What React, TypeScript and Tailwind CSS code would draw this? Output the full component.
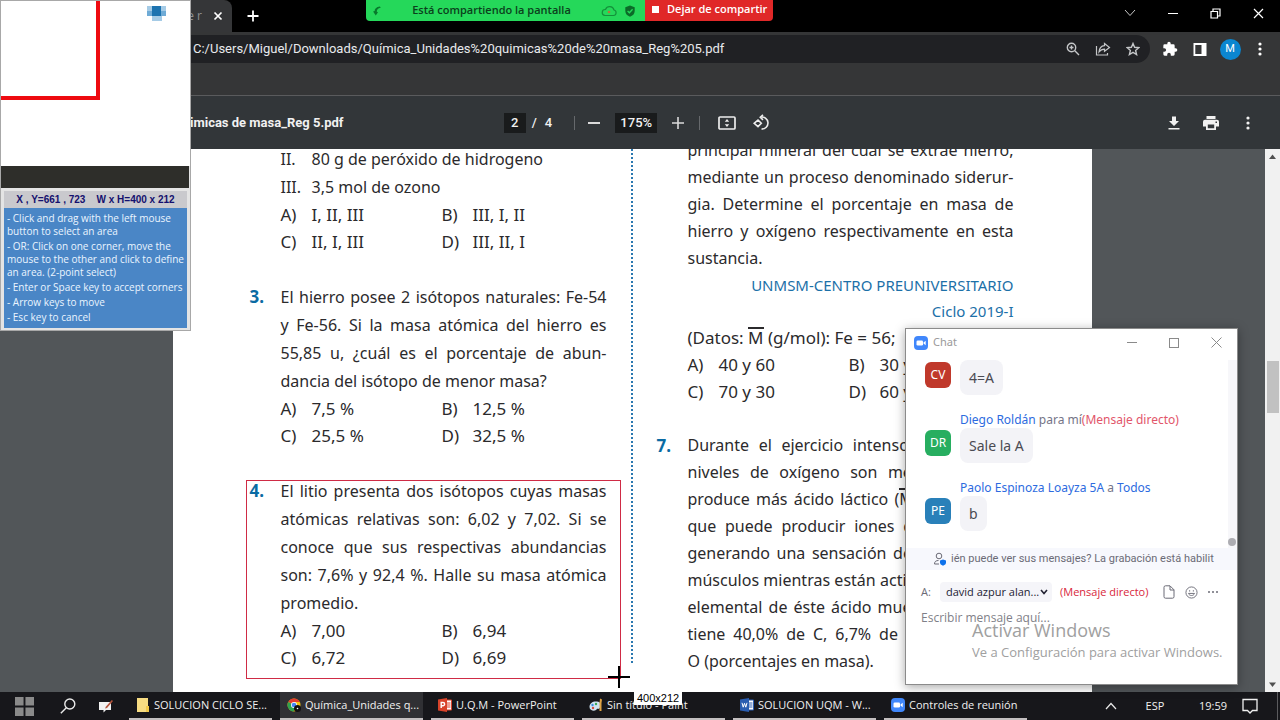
import type { ReactNode } from "react";

const docFont = "font-['Noto_Sans',sans-serif]";
const uiFont = "font-['Open_Sans',sans-serif]";

/* ---------- Document ---------- */

type Option = [string, ReactNode];

function Options({ items }: { items: Option[] }) {
  return (
    <dl className="grid grid-cols-[161px_1fr] text-[17px] leading-[27px]">
      {items.map(([key, value]) => (
        <div key={key} className="flex whitespace-nowrap">
          <dt className="w-[31px]">{key}</dt>
          <dd>{value}</dd>
        </div>
      ))}
    </dl>
  );
}

function Lines({ full, last }: { full: ReactNode[]; last?: ReactNode }) {
  return (
    <p>
      {full.map((line, i) => (
        <span key={i} className="block whitespace-nowrap [text-align-last:justify]">
          {line}
        </span>
      ))}
      {last && <span className="block whitespace-nowrap">{last}</span>}
    </p>
  );
}

function Question({ number, children }: { number?: string; children: ReactNode }) {
  return (
    <section className="flex">
      <div className="w-[31px] shrink-0 text-[17px] font-bold text-[#0a6ba3]">{number}</div>
      <div className="min-w-0 flex-1">{children}</div>
    </section>
  );
}

const MBar = () => <span className="inline-block border-t-2 border-[#2b2a2c] leading-[18px]">M</span>;

function PdfPage() {
  return (
    <article
      className={`${docFont} flex w-[919px] shrink-0 justify-center overflow-hidden bg-white pr-0.5 text-[16px] text-[#2b2a2c]`}
    >
      <div className="-mt-1 flex w-[357px] shrink-0 flex-col gap-7 leading-7">
        <Question>
          <div className="flex">
            <span className="w-[31px]">II.</span>80 g de peróxido de hidrogeno
          </div>
          <div className="flex">
            <span className="w-[31px]">III.</span>3,5 mol de ozono
          </div>
          <Options
            items={[
              ["A)", "I, II, III"],
              ["B)", "III, I, II"],
              ["C)", "II, I, III"],
              ["D)", "III, II, I"],
            ]}
          />
        </Question>
        <Question number="3.">
          <Lines
            full={[
              "El hierro posee 2 isótopos naturales: Fe-54",
              "y Fe-56. Si la masa atómica del hierro es",
              "55,85 u, ¿cuál es el porcentaje de abun-",
            ]}
            last="dancia del isótopo de menor masa?"
          />
          <Options
            items={[
              ["A)", "7,5 %"],
              ["B)", "12,5 %"],
              ["C)", "25,5 %"],
              ["D)", "32,5 %"],
            ]}
          />
        </Question>
        <div className="relative">
          <Question number="4.">
            <Lines
              full={[
                "El litio presenta dos isótopos cuyas masas",
                "atómicas relativas son: 6,02 y 7,02. Si se",
                "conoce que sus respectivas abundancias",
                "son: 7,6% y 92,4 %. Halle su masa atómica",
              ]}
              last="promedio."
            />
            <Options
              items={[
                ["A)", "7,00"],
                ["B)", "6,94"],
                ["C)", "6,72"],
                ["D)", "6,69"],
              ]}
            />
          </Question>
          <div className="absolute top-[3px] -right-3.5 -bottom-2 -left-1 border border-[#cf2b45]" />
        </div>
      </div>

      <div className="mx-6 h-[514px] w-0 shrink-0 border-l-2 border-dotted border-[#2a78b0]" />

      <div className="-mt-3 flex w-[357px] shrink-0 flex-col gap-[27px] leading-[27px]">
        <Question>
          <Lines
            full={[
              "principal mineral del cual se extrae hierro,",
              "mediante un proceso denominado siderur-",
              "gia. Determine el porcentaje en masa de",
              "hierro y oxígeno respectivamente en esta",
            ]}
            last="sustancia."
          />
          <p className="text-right text-[15px] leading-[26px] text-[#1c70a8]">
            UNMSM-CENTRO PREUNIVERSITARIO
            <br />
            Ciclo 2019-I
          </p>
          <p className="text-[17px] leading-[27px] whitespace-nowrap">
            (Datos: <MBar /> (g/mol): Fe = 56;
          </p>
          <Options
            items={[
              ["A)", "40 y 60"],
              ["B)", "30 y 70"],
              ["C)", "70 y 30"],
              ["D)", "60 y 40"],
            ]}
          />
        </Question>
        <Question number="7.">
          <Lines
            full={[
              "Durante el ejercicio intenso, cuando sus",
              "niveles de oxígeno son menores, ya se",
              <>
                produce más ácido láctico (<MBar /> = 90 g/mol),
              </>,
              "que puede producir iones de hidrógeno,",
              "generando una sensación de ardor en los",
              "músculos mientras están activos. El análisis",
              "elemental de éste ácido muestra que con-",
              "tiene 40,0% de C, 6,7% de H y 53,3% de",
            ]}
            last="O (porcentajes en masa)."
          />
        </Question>
      </div>
    </article>
  );
}

/* ---------- Browser ---------- */

function IconButton({ label, className = "", children }: { label: string; className?: string; children: ReactNode }) {
  return (
    <button type="button" aria-label={label} className={`flex shrink-0 items-center justify-center ${className}`}>
      {children}
    </button>
  );
}

function Dots({ className = "" }: { className?: string }) {
  return (
    <svg viewBox="0 0 4 14" className={className} fill="currentColor">
      <circle cx="2" cy="2" r="1.6" />
      <circle cx="2" cy="7" r="1.6" />
      <circle cx="2" cy="12" r="1.6" />
    </svg>
  );
}

function ShareBanner() {
  return (
    <div
      className={`${uiFont} absolute top-0 left-[366px] flex h-[21px] w-[407px] overflow-hidden rounded-b text-[11px] font-semibold`}
    >
      <div className="flex w-[279px] shrink-0 items-center bg-[#25d85a] text-[#0b3f1c]">
        <svg viewBox="0 0 10 12" className="ml-1.5 size-2.5" fill="#087a2c">
          <path d="M8.5 0.5C4 1 2 3.500 2.200 6L0.300 6.500L3.500 11.500L6.200 7.500L4.800 7C4.500 4.500 6 2.500 9.500 2Z" />
        </svg>
        <span className="flex-1 text-center whitespace-nowrap">Está compartiendo la pantalla</span>
        <svg viewBox="0 0 16 12" className="mr-2 h-3 w-4" fill="none" stroke="#14913a" strokeWidth="1.200">
          <path d="M4 10.500H12.500A2.800 2.800 0 0 0 13 5A4.500 4.500 0 0 0 4.500 4.500A3 3 0 0 0 4 10.500Z" />
          <circle cx="8" cy="7" r="1.300" fill="#b5743a" stroke="none" />
        </svg>
        <svg viewBox="0 0 10 12" className="mr-2.5 h-3 w-2.5">
          <path d="M5 0.500L9.700 2.200V6C9.700 9 7.500 10.800 5 11.700C2.500 10.800 0.300 9 0.300 6V2.200Z" fill="#0b6b28" />
          <path d="M2.600 6L4.400 7.800L7.600 4.300" stroke="#25d85a" strokeWidth="1.300" fill="none" />
        </svg>
      </div>
      <button type="button" className="flex flex-1 items-center bg-[#e02828] pb-0.5 pl-[7px] whitespace-nowrap text-white">
        <span className="mr-2 size-[7px] bg-white" />
        Dejar de compartir
      </button>
    </div>
  );
}

function TabStrip() {
  return (
    <header className="flex h-8 shrink-0 bg-black text-white">
      <div className="flex w-[232px] shrink-0 items-center justify-end rounded-tr-lg bg-[#353638] pr-1.5">
        <span className={`${uiFont} mr-2 text-[12px] text-[#8f9092]`}>e r</span>
        <IconButton label="Cerrar pestaña" className="size-4">
          <svg viewBox="0 0 10 10" className="size-2.5" stroke="currentColor" strokeWidth="1.700">
            <path d="M1.500 1.500L8.500 8.500M8.500 1.500L1.500 8.500" />
          </svg>
        </IconButton>
      </div>
      <IconButton label="Nueva pestaña" className="ml-3 w-[18px]">
        <svg viewBox="0 0 12 12" className="size-3" stroke="currentColor" strokeWidth="1.800">
          <path d="M6 0.500V11.500M0.500 6H11.500" />
        </svg>
      </IconButton>
      <div className="flex-1" />
      <div className="flex items-center pb-1.5">
        <IconButton label="Buscar pestañas" className="h-5 w-[43px]">
          <svg viewBox="0 0 12 8" className="h-2 w-3" stroke="#c8c8c8" fill="none">
            <path d="M1 1L6 6.500L11 1" />
          </svg>
        </IconButton>
        <IconButton label="Minimizar" className="h-5 w-[43px]">
          <span className="h-px w-2.5 bg-white" />
        </IconButton>
        <IconButton label="Restaurar" className="h-5 w-[43px]">
          <svg viewBox="0 0 11 11" className="size-[11px]" stroke="currentColor" fill="none" strokeWidth="1.200">
            <path d="M1 3.500H7.500V10H1ZM3 3.500V1H10V8H7.500" />
          </svg>
        </IconButton>
        <IconButton label="Cerrar" className="h-5 w-[43px]">
          <svg viewBox="0 0 11 11" className="size-[11px]" stroke="currentColor" strokeWidth="1.200">
            <path d="M1 1L10 10M10 1L1 10" />
          </svg>
        </IconButton>
      </div>
    </header>
  );
}

function AddressBar() {
  return (
    <div className="flex h-[63px] shrink-0 items-start bg-[#353637] pt-[3px] text-white">
      <div className="flex h-7 min-w-0 flex-1 items-center rounded-r-full bg-[#202124] pr-0.5 pl-[193px] text-[#c4c6c8]">
        <input
          aria-label="Dirección"
          className="min-w-0 flex-1 bg-transparent font-['Roboto',sans-serif] text-[13px] text-[#e8eaed] outline-none"
          defaultValue="C:/Users/Miguel/Downloads/Química_Unidades%20quimicas%20de%20masa_Reg%205.pdf"
        />
        <IconButton label="Zoom" className="w-[30px]">
          <svg viewBox="0 0 14 14" className="size-3.5" stroke="currentColor" fill="none" strokeWidth="1.400">
            <circle cx="5.500" cy="5.500" r="4.200" />
            <path d="M8.800 8.800L13 13M5.500 3.500V7.500M3.500 5.500H7.500" />
          </svg>
        </IconButton>
        <IconButton label="Compartir" className="w-[30px]">
          <svg viewBox="0 0 16 14" className="h-3.5 w-4" stroke="currentColor" fill="none" strokeWidth="1.200">
            <path d="M1.500 4V13H12.500V11M9.500 1.500L14.500 5.500L9.500 9.300V7.200C7 7.200 5.500 8 4 10C4.300 6.500 6 4 9.500 3.700Z" />
          </svg>
        </IconButton>
        <IconButton label="Agregar a favoritos" className="w-[30px]">
          <svg viewBox="0 0 14 14" className="size-3.5" stroke="currentColor" fill="none" strokeWidth="1.400">
            <path d="M7 1.500L8.600 5.300L12.800 5.700L9.600 8.400L10.600 12.500L7 10.300L3.400 12.500L4.400 8.400L1.200 5.700L5.400 5.300Z" />
          </svg>
        </IconButton>
      </div>
      <div className="flex h-7 items-center px-[5px]">
        <IconButton label="Extensiones" className="w-[30px]">
          <svg viewBox="0 0 24 24" className="size-4" fill="currentColor">
            <path d="M20.500 11H19V7a2 2 0 0 0-2-2h-4V3.500a2.500 2.500 0 0 0-5 0V5H4a2 2 0 0 0-2 2v3.800h1.500a2.700 2.700 0 0 1 0 5.400H2V20a2 2 0 0 0 2 2h3.800v-1.500a2.700 2.700 0 0 1 5.400 0V22H17a2 2 0 0 0 2-2v-4h1.500a2.500 2.500 0 0 0 0-5Z" />
          </svg>
        </IconButton>
        <IconButton label="Panel lateral" className="w-[30px]">
          <svg viewBox="0 0 14 13" className="h-[13px] w-3.5" fill="currentColor">
            <path fillRule="evenodd" d="M0.500 0H13.500V13H0.500ZM2.300 2V11H8.500V2Z" />
          </svg>
        </IconButton>
        <IconButton label="Perfil" className="w-[30px]">
          <span className="flex size-[21px] items-center justify-center rounded-full bg-[#0b86d0] font-['Roboto',sans-serif] text-[11px]">
            M
          </span>
        </IconButton>
        <IconButton label="Menú" className="w-[30px]">
          <Dots className="h-3.5 w-1" />
        </IconButton>
      </div>
    </div>
  );
}

function PdfToolbar() {
  const field = "h-5 bg-[#191b1c] text-center outline-none";
  return (
    <div className="grid h-[54px] shrink-0 grid-cols-[1fr_auto_1fr] items-center border-t border-[#5a5b5d] bg-[#323639] font-['Roboto',sans-serif] text-[13px] font-medium text-[#f1f1f1]">
      <h1 className="pl-[190px] font-bold whitespace-nowrap">imicas de masa_Reg 5.pdf</h1>
      <div className="mr-1.5 flex items-center">
        <input aria-label="Página" className={`${field} w-[22px]`} defaultValue="2" />
        <span className="ml-1.5">/</span>
        <span className="ml-2">4</span>
        <span className="ml-[22px] h-3.5 w-px bg-[#66696c]" />
        <IconButton label="Alejar" className="ml-3 size-3.5">
          <span className="h-0.5 w-3 bg-[#dadada]" />
        </IconButton>
        <input aria-label="Nivel de zoom" className={`${field} ml-3.5 w-[42px]`} defaultValue="175%" />
        <IconButton label="Acercar" className="ml-3.5 size-3.5">
          <svg viewBox="0 0 12 12" className="size-3" stroke="#dadada" strokeWidth="1.600">
            <path d="M6 0V12M0 6H12" />
          </svg>
        </IconButton>
        <span className="ml-3.5 h-3.5 w-px bg-[#66696c]" />
        <IconButton label="Ajustar a la página" className="ml-[18px] h-4 w-[18px]">
          <svg viewBox="0 0 18 14" className="h-3.5 w-[18px]">
            <rect x="1" y="1" width="16" height="12" rx="1" fill="none" stroke="#ededed" strokeWidth="1.700" />
            <path d="M9 3L11.200 5.700H6.800ZM9 11L11.200 8.300H6.800Z" fill="#ededed" />
          </svg>
        </IconButton>
        <IconButton label="Girar" className="ml-4 size-[18px]">
          <svg viewBox="0 0 18 18" className="size-[18px]" stroke="#ededed" fill="none" strokeWidth="1.600">
            <path d="M6 6L9.300 9.300L6 12.600L2.200 9.300ZM8.500 3.200A6 6 0 1 1 9.500 15M11 0.800L8.300 3.300L11 5.800" />
          </svg>
        </IconButton>
      </div>
      <div className="flex justify-end pr-3.5">
        <IconButton label="Descargar" className="w-[37px]">
          <svg viewBox="0 0 12 14" className="h-3.5 w-3" fill="currentColor">
            <path d="M4 0.500H8V5H11L6 10L1 5H4ZM0.500 12H11.500V13.600H0.500Z" />
          </svg>
        </IconButton>
        <IconButton label="Imprimir" className="w-[37px]">
          <svg viewBox="0 0 16 14" className="h-3.5 w-4" fill="currentColor">
            <path
              fillRule="evenodd"
              d="M3.500 0H12.500V3H3.500ZM2 3.800H14A2 2 0 0 1 16 5.800V10.500H13V14H3V10.500H0V5.800A2 2 0 0 1 2 3.800ZM4.800 8.500V12.300H11.200V8.500ZM12.500 5.500V7H14V5.500Z"
            />
          </svg>
        </IconButton>
        <IconButton label="Más acciones" className="w-[37px]">
          <Dots className="h-3.5 w-1" />
        </IconButton>
      </div>
    </div>
  );
}

function Scrollbar() {
  return (
    <div className="flex w-[15px] shrink-0 flex-col items-center justify-between bg-[#f1f1f1]">
      <svg viewBox="0 0 15 15" className="size-[15px]" fill="#505050">
        <path d="M7.500 5.500L11 10H4Z" />
      </svg>
      <div className="mt-[197px] mb-auto h-[52px] w-3 bg-[#c1c1c1]" />
      <svg viewBox="0 0 15 15" className="size-[15px]" fill="#505050">
        <path d="M7.500 10L11 5.500H4Z" />
      </svg>
    </div>
  );
}

/* ---------- Capture helper panel ---------- */

function CapturePanel() {
  return (
    <aside className="absolute top-0 left-0 w-[191px] border border-[#a8a8a8] bg-[#e4e4e4]">
      <div className="h-[165px] bg-white">
        <div className="flex items-start">
          <div className="h-[99px] w-[99px] border-r-4 border-b-4 border-[#ee0a10]" />
          <svg viewBox="0 0 20 15" className="mt-[5px] ml-[47px] h-[15px] w-5" shapeRendering="crispEdges">
            <path fill="#a5cbe6" d="M0 0H19V10H15V15H5V10H0Z" />
            <path fill="#6fabd6" d="M0 5H19V10H0Z" />
            <path fill="#1c73b0" d="M5 0H14V10H5Z" />
          </svg>
        </div>
      </div>
      <div className="mr-px h-[22px] bg-[#2e2e2a]" />
      <div className="mx-[3px] mt-[3px] bg-[#c9c9cd] text-center font-['Liberation_Sans',sans-serif] text-[10px] leading-[17px] font-bold whitespace-pre text-[#14106e]">
        {"X , Y=661 , 723    W x H=400 x 212"}
      </div>
      <ul
        className={`${uiFont} mx-[3px] mb-0.5 flex h-[120px] flex-col gap-0.5 bg-[#4a86c6] pt-1 pl-[3px] text-[10px] leading-[13px] whitespace-nowrap text-[#eaf5ff]`}
      >
        <li>- Click and drag with the left mouse<br />button to select an area</li>
        <li>- OR: Click on one corner, move the<br />mouse to the other and click to define<br />an area. (2-point select)</li>
        <li>- Enter or Space key to accept corners</li>
        <li>- Arrow keys to move</li>
        <li>- Esc key to cancel</li>
      </ul>
    </aside>
  );
}

/* ---------- Chat window ---------- */

function ZoomLogo({ className = "" }: { className?: string }) {
  return (
    <svg viewBox="0 0 14 14" className={className}>
      <rect width="14" height="14" rx="4" fill="#4087fb" />
      <rect x="2.500" y="4.500" width="6.500" height="5" rx="1.300" fill="#fff" />
      <path d="M9.500 6.400L11.700 4.800V9.200L9.500 7.600Z" fill="#fff" />
    </svg>
  );
}

function Message({ initials, color, sender, text }: { initials: string; color: string; sender?: ReactNode; text: string }) {
  return (
    <li>
      {sender && <div className="pl-[35px] text-[12px] leading-4">{sender}</div>}
      <div className="flex items-start">
        <span className={`${color} mt-0.5 flex size-[26px] items-center justify-center rounded-md text-[12px] text-white`}>
          {initials}
        </span>
        <span className="ml-[9px] rounded-lg bg-[#f3f3f7] px-[9px] text-[14px] leading-[35px] text-[#4a4a52]">{text}</span>
      </div>
    </li>
  );
}

function ChatWindow() {
  return (
    <section
      className={`${docFont} absolute top-[328px] right-[42px] flex h-[357px] w-[333px] flex-col border border-[#8b8b8b] bg-white text-[12px] shadow-[0_2px_10px_rgba(0,0,0,0.35)]`}
    >
      <div className="flex h-[27px] shrink-0 items-center pl-2 text-[11px] text-[#9a9a9a]">
        <ZoomLogo className="size-3.5" />
        <h2 className="ml-[5px] flex-1">Chat</h2>
        <IconButton label="Minimizar chat" className="w-[42px]">
          <span className="h-px w-2.5 bg-[#8a8a8a]" />
        </IconButton>
        <IconButton label="Maximizar chat" className="w-[42px]">
          <span className="size-2.5 border border-[#8a8a8a]" />
        </IconButton>
        <IconButton label="Cerrar chat" className="w-[42px]">
          <svg viewBox="0 0 11 11" className="size-[11px]" stroke="#8a8a8a">
            <path d="M0.500 0.500L10.500 10.500M10.500 0.500L0.500 10.500" />
          </svg>
        </IconButton>
      </div>

      <div className="flex min-h-0 flex-1">
        <ul className="flex flex-1 flex-col gap-[17px] pt-1 pl-[19px]">
          <Message initials="CV" color="bg-[#c0392b]" text="4=A" />
          <Message
            initials="DR"
            color="bg-[#27ae60]"
            text="Sale la A"
            sender={
              <>
                <span className="text-[#2d6be0]">Diego Roldán</span> <span className="text-[#747487]">para mí</span>
                <span className="text-[#e2566a]">(Mensaje directo)</span>
              </>
            }
          />
          <Message
            initials="PE"
            color="bg-[#2980b9]"
            text="b"
            sender={
              <>
                <span className="text-[#2d6be0]">Paolo Espinoza Loayza 5A</span> <span className="text-[#747487]">a</span>{" "}
                <span className="text-[#2d6be0]">Todos</span>
              </>
            }
          />
        </ul>
        <div className="mt-1 flex w-[9px] items-end bg-[#f7f7fa] pb-0.5">
          <span className="size-2 rounded-full bg-[#adadb2]" />
        </div>
      </div>

      <div className="flex h-[22px] shrink-0 items-center bg-[#f7f8fd] pl-[27px] font-['Roboto',sans-serif] text-[11px] whitespace-nowrap text-[#6b6b76]">
        <svg viewBox="0 0 14 14" className="mr-1 size-3.5" fill="none" stroke="#6b6b76">
          <circle cx="6" cy="4" r="2.800" />
          <path d="M6 12H1.500C1.500 9.500 3 8.500 5.500 8.500" />
          <path d="M10 7.500L13 8.500V10.500C13 12 12 13 10 13.700C8 13 7 12 7 10.500V8.500Z" fill="#0e71eb" stroke="none" />
        </svg>
        <span>ién puede ver sus mensajes? La grabación está habilit</span>
      </div>

      <div className={`${uiFont} mt-3 flex h-5 shrink-0 items-center pl-[15px] text-[11px]`}>
        <label htmlFor="recipient" className="w-[19px] text-[#6b6b76]">
          A:
        </label>
        <span className="relative flex h-5 w-[112px] items-center rounded bg-[#f5f5f9]">
          <select id="recipient" className="w-full appearance-none bg-transparent pl-1.5 text-[11px] text-[#232333] outline-none">
            <option>david azpur alan...</option>
          </select>
          <svg viewBox="0 0 8 6" className="pointer-events-none absolute right-1 h-1.5 w-2" fill="none" stroke="#232333" strokeWidth="1.600">
            <path d="M1 1L4 4.500L7 1" />
          </svg>
        </span>
        <span className="ml-2 flex-1 whitespace-nowrap text-[#d9263b]">(Mensaje directo)</span>
        <div className="flex items-center gap-2.5 pr-[19px] text-[#6b6b76]">
          <IconButton label="Archivo">
            <svg viewBox="0 0 12 14" className="h-3.5 w-3" fill="none" stroke="currentColor">
              <path d="M2.500 0.800H7L11 4.800V11.700A1.500 1.500 0 0 1 9.500 13.200H2.500A1.500 1.500 0 0 1 1 11.700V2.300A1.500 1.500 0 0 1 2.500 0.800ZM7 1V5H11" />
            </svg>
          </IconButton>
          <IconButton label="Emoji">
            <svg viewBox="0 0 14 14" className="size-[13px]" fill="none" stroke="currentColor">
              <circle cx="7" cy="7" r="6" />
              <path d="M3.800 8C4.500 11 9.500 11 10.200 8ZM5 4.500V6M9 4.500V6" />
            </svg>
          </IconButton>
          <IconButton label="Más opciones">
            <svg viewBox="0 0 10 2" className="h-0.5 w-2.5" fill="currentColor">
              <circle cx="1" cy="1" r="1" />
              <circle cx="5" cy="1" r="1" />
              <circle cx="9" cy="1" r="1" />
            </svg>
          </IconButton>
        </div>
      </div>
      <textarea
        aria-label="Mensaje"
        placeholder="Escribir mensaje aquí..."
        className={`${uiFont} mt-2 h-[74px] shrink-0 resize-none bg-transparent pl-[15px] text-[12px] leading-4 outline-none placeholder:text-[#7f7f88]`}
      />
    </section>
  );
}

/* ---------- Taskbar ---------- */

function AppIcon({ name }: { name: string }) {
  if (name === "zoom") return <ZoomLogo className="size-3.5" />;
  return (
    <svg viewBox="0 0 14 14" className="size-3.5 shrink-0">
      {name === "folder" && (
        <>
          <path d="M1 0H12V14H1Z" fill="#f7dc83" />
          <path d="M10 8H13V14H10Z" fill="#f2c94b" />
        </>
      )}
      {name === "chrome" && (
        <>
          <circle cx="7" cy="7" r="6.500" fill="#f4c20d" />
          <path d="M7 7L1.300 3.900A6.500 6.500 0 0 1 12.800 4H7Z" fill="#e23c2e" />
          <path d="M7 7L1.300 3.900A6.500 6.500 0 0 0 6.500 13.500L9.500 8.500Z" fill="#2fa24f" />
          <circle cx="7" cy="7" r="3" fill="#fff" />
          <circle cx="7" cy="7" r="2.300" fill="#4285f4" />
          <circle cx="10.500" cy="10.500" r="3.500" fill="#111" />
          <circle cx="10.500" cy="10.500" r="0.800" fill="#fff" />
        </>
      )}
      {(name === "powerpoint" || name === "word") && (
        <>
          <path d="M7 2H13.500V12H7Z" fill="#fff" stroke={name === "word" ? "#2a5db0" : "#d8432a"} />
          <path d="M9 5H12.500M9 7H12.500M9 9H12.500" stroke={name === "word" ? "#2a5db0" : "#d8432a"} />
          <path d="M0 1.500L9 0V14L0 12.500Z" fill={name === "word" ? "#2a5db0" : "#d8432a"} />
          {name === "word" ? (
            <path d="M2 4.800L3.200 9.200L4.500 5.300L5.800 9.200L7 4.800" stroke="#fff" fill="none" />
          ) : (
            <path d="M3.200 10V4.500H5A1.600 1.600 0 0 1 5 7.700H3.200" stroke="#fff" strokeWidth="1.400" fill="none" />
          )}
        </>
      )}
      {name === "paint" && (
        <>
          <path d="M0.500 9C0.500 5 4 3 8 3.500C12 4 12.500 7 11 9.500C9.500 12 8.500 10 7.500 11.500C6.500 13.500 0.500 13 0.500 9Z" fill="#cfe3f2" />
          <circle cx="3.500" cy="7" r="1.200" fill="#3a8de0" />
          <circle cx="7" cy="6" r="1.200" fill="#3aa655" />
          <circle cx="4" cy="10" r="1.200" fill="#d94a3a" />
          <path d="M10.500 13V5L11 0.500L13 1.500L12.500 5V13Z" fill="#e0a445" />
        </>
      )}
    </svg>
  );
}

const tasks = [
  { name: "folder", label: "SOLUCION CICLO SE..." },
  { name: "chrome", label: "Química_Unidades q..." },
  { name: "powerpoint", label: "U.Q.M - PowerPoint" },
  { name: "paint", label: "Sin título - Paint" },
  { name: "word", label: "SOLUCION UQM - W..." },
  { name: "zoom", label: "Controles de reunión" },
];

function Taskbar() {
  return (
    <footer className={`${uiFont} flex h-7 shrink-0 items-stretch bg-[#17171b] text-[11px] text-[#f0f0f0]`}>
      <IconButton label="Inicio" className="w-12">
        <svg viewBox="0 0 20 20" className="size-[19px]" fill="#8a8a8a">
          <path d="M0 0H9V9H0ZM11 0H20V9H11ZM0 11H9V20H0ZM11 11H20V20H11Z" />
        </svg>
      </IconButton>
      <IconButton label="Buscar" className="w-[39px]">
        <svg viewBox="0 0 16 16" className="size-4" stroke="#eaeaea" fill="none" strokeWidth="1.400">
          <circle cx="9.800" cy="6" r="5" />
          <path d="M6.300 9.700L0.800 15.300" />
        </svg>
      </IconButton>
      <IconButton label="Notas" className="w-[38px]">
        <svg viewBox="0 0 14 13" className="h-[13px] w-3.5">
          <path d="M0 2H12V10H7L4.500 12.500V10H0Z" fill="#f2f2f2" />
          <path d="M12.800 0L14 1L8 8L6 8.500L6.800 6.800Z" fill="#b5543c" />
        </svg>
      </IconButton>
      <nav className="ml-1 flex gap-2">
        {tasks.map((t) => (
          <button
            key={t.name}
            type="button"
            className={`flex w-[143px] items-center gap-1 border-b-2 border-[#c3bfc0] pl-[7px] whitespace-nowrap ${
              t.name === "chrome" ? "bg-[#303034]" : ""
            }`}
          >
            <AppIcon name={t.name} />
            {t.label}
          </button>
        ))}
      </nav>
      <div className="flex-1" />
      <IconButton label="Iconos ocultos" className="w-14">
        <svg viewBox="0 0 12 8" className="h-2 w-3" stroke="#eaeaea" fill="none" strokeWidth="1.200">
          <path d="M1 7L6 1.500L11 7" />
        </svg>
      </IconButton>
      <span className="flex w-8 items-center justify-center">ESP</span>
      <time className="flex w-[58px] items-center justify-end pr-0.5">19:59</time>
      <IconButton label="Notificaciones" className="mr-[18px] ml-3 w-[18px]">
        <svg viewBox="0 0 16 16" className="size-4" stroke="#f0f0f0" fill="none" strokeWidth="1.300">
          <path d="M1 1.500H15V12.500H10.500L8 15L5.500 12.500H1Z" />
        </svg>
      </IconButton>
      <span className="mr-0.5 w-px bg-[#5b5b5e]" />
    </footer>
  );
}

export default function App() {
  return (
    <div className="relative flex h-screen flex-col overflow-hidden">
      <TabStrip />
      <AddressBar />
      <PdfToolbar />
      <main className="flex min-h-0 flex-1 bg-[#525659]">
        <div className="flex min-w-0 flex-1 justify-center overflow-hidden">
          <PdfPage />
        </div>
        <Scrollbar />
      </main>
      <Taskbar />

      <ShareBanner />
      <CapturePanel />
      <ChatWindow />

      <div className={`${uiFont} pointer-events-none absolute right-[50px] bottom-[58px] w-[258px] whitespace-nowrap text-[#a0a0a0]`}>
        <p className="text-[18px] leading-6">Activar Windows</p>
        <p className="text-[13px] leading-5">Ve a Configuración para activar Windows.</p>
      </div>

      <svg viewBox="0 0 22 22" className="absolute top-[666px] left-[608px] size-[22px]" stroke="#000" strokeWidth="2">
        <path d="M11 0V22M0 11H22" />
      </svg>
      <span className="absolute top-[691px] left-[634px] bg-white px-[3px] font-['Liberation_Sans',sans-serif] text-[11px] leading-[14px] text-black">
        400x212
      </span>
    </div>
  );
}
